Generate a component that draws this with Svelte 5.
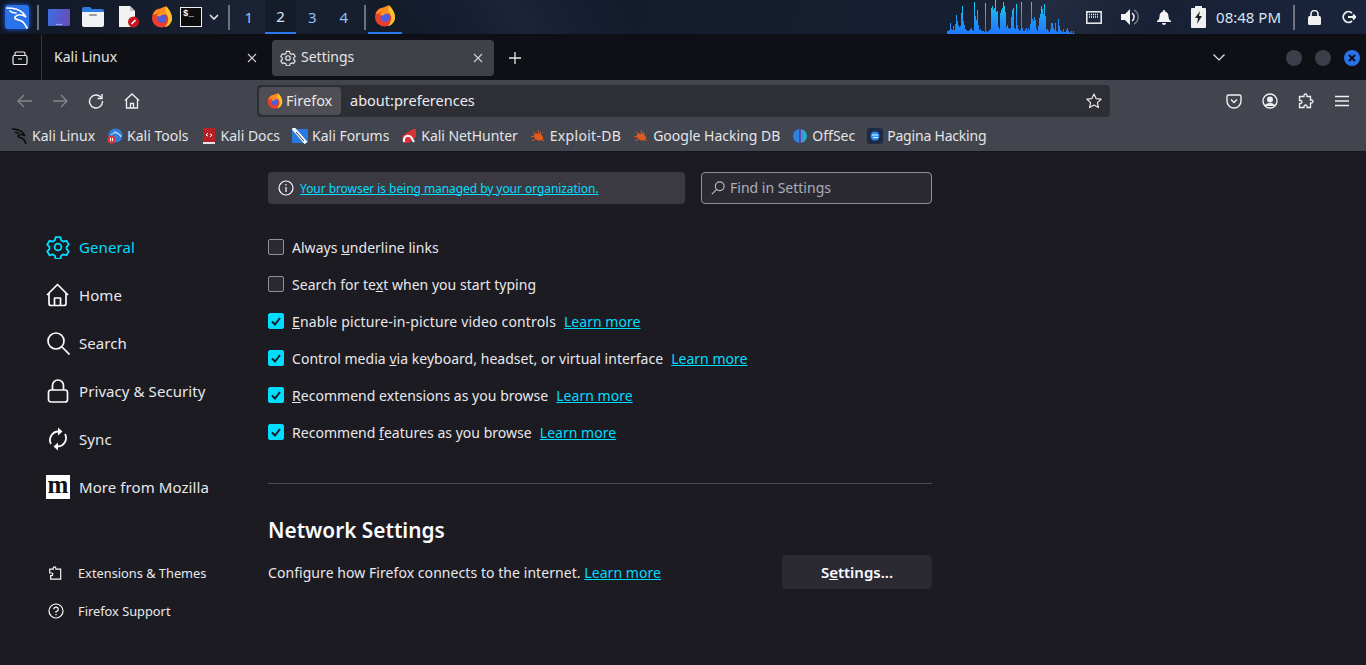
<script>
  const cpu = [3,3,4,11,5,4,8,4,10,19,13,9,7,8,21,28,13,9,5,4,3,3,4,5,6,4,3,32,18,14,24,9,4,5,3,3,3,2,31,3,2,3,4,5,26,28,24,26,34,22,23,7,5,21,24,26,32,28,22,7,9,6,5,6,17,24,26,6,5,30,9,5,3,4,32,6,3,3,5,6,3,6,4,10,32,15,13,17,14,5,3,8,16,20,28,25,20,30,18,4,5,3,2,5,11,11,6,4,11,3,2,15,8,4,3,2,5,2,2,4,6,3,2,1,3,1,3];
  const bookmarks = [
    { label: 'Kali Linux', icon: 'dragon', cls: '' },
    { label: 'Kali Tools', icon: 'tools', cls: '' },
    { label: 'Kali Docs', icon: 'docs', cls: '' },
    { label: 'Kali Forums', icon: 'forums', cls: '' },
    { label: 'Kali NetHunter', icon: 'hunter', cls: 'tight' },
    { label: 'Exploit-DB', icon: 'bug', cls: 'wider' },
    { label: 'Google Hacking DB', icon: 'bug', cls: '' },
    { label: 'OffSec', icon: 'offsec', cls: '' },
    { label: 'Pagina Hacking', icon: 'pagina', cls: 'narrow' }
  ];
</script>

{#snippet firefox(size)}
  <svg width={size} height={size} viewBox="0 0 24 24">
    <circle cx="11.5" cy="13" r="10.5" fill="#ea3f2e" />
    <path d="M2 10 C3 6 6 3 10 3 C13 1 15 1 17 0 C16 2 16 3 17 4 C22 7 24 12 22.5 17 C20 11 17 8 12 7.5 C8 7.5 5 9 2 10Z" fill="#ff8a1f" />
    <path d="M17 0.5 C20 4 24 9 22.5 16 C21.5 20 18 22.5 15 23 C19 19 20 13 17 9 C15 6 15 3 17 0.5Z" fill="#ffc22e" />
    <circle cx="12" cy="13.5" r="4.8" fill="#4a5fe0" />
    <path d="M6 11 C8 7 14 6.5 17.5 9 C14 8.8 11 9.5 10 11.5Z" fill="#ff9a1c" />
  </svg>
{/snippet}

{#snippet gear(size, color)}
  <svg width={size} height={size} viewBox="0 0 24 24" fill="none" stroke={color} stroke-width="1.8" stroke-linejoin="round">
    <path d="M9.6 2.2h4.8l.7 3 2.4 1.4 3-.9 2.3 4-2.2 2.1v2.4l2.2 2.1-2.3 4-3-.9-2.4 1.4-.7 3H9.6l-.7-3-2.4-1.4-3 .9-2.3-4 2.2-2.1v-2.4L1.2 9.7l2.3-4 3 .9 2.4-1.4z" />
    <circle cx="12" cy="12" r="3.4" />
  </svg>
{/snippet}

{#snippet check()}
  <i class="box on"><svg width="12" height="12" viewBox="0 0 12 12" fill="none" stroke="#1c1b22" stroke-width="2"><path d="M2 6.5 5 9.5 10 3" /></svg></i>
{/snippet}

{#snippet favicon(kind)}
  <svg width="16" height="16" viewBox="0 0 16 16" fill="none">
    {#if kind === 'dragon'}
      <path d="M0 1C4 1 8 2 11 5L13 8C10 6 7 6 6 8 6 10 9 9 11 11 13 12 13 14 14 16M3 4C4 5 6 5 7 5" stroke="#0a0a0a" stroke-width="1.5" />
    {:else if kind === 'tools'}
      <circle cx="8.5" cy="7.5" r="7" fill="#2f7fe0" />
      <path d="M4 7c3-3 6-3 10 1M7 4c3 0 5 2 7 5" stroke="#cfe4fb" stroke-width="1" />
      <circle cx="4.5" cy="11.5" r="4" fill="#e03a3a" />
      <path d="M3.5 10v3M5.5 10v3" stroke="#fff" />
    {:else if kind === 'docs'}
      <rect x="2" y="0" width="12" height="16" rx="1" fill="#b81f24" />
      <rect x="2" y="14" width="12" height="2" fill="#e6e6e6" />
      <path d="M7 5 5 7l2 1M9 6l2 1-2 2" stroke="#fff" />
    {:else if kind === 'forums'}
      <rect x="0" y="1" width="16" height="14" rx="1" fill="#2a7be0" />
      <path d="M1 0l13 15" stroke="#fff" stroke-width="3.5" />
      <path d="M4 4l8 9" stroke="#333" stroke-width="1" />
    {:else if kind === 'hunter'}
      <path d="M1 8 12 1h3v8l-7 6H3z" fill="#d8323a" />
      <path d="M3 14c-1-5 3-8 7-5l3 5" stroke="#fff" stroke-width="2" />
    {:else if kind === 'bug'}
      <ellipse cx="8.5" cy="9" rx="5" ry="3.2" fill="#e2591d" transform="rotate(25 8.5 9)" />
      <path d="M1 9l5-1M3 4l4 3M8 2l1 4M2 13l5-3M11 4l-1 3M14 13l-3-2" stroke="#e2591d" />
    {:else if kind === 'offsec'}
      <path d="M7 1C3 2 1 5 1 8s2 6 6 7z" fill="#2f7fe0" />
      <path d="M9 1c4 1 6 4 6 7s-2 6-6 7z" fill="#2aa7c9" />
      <rect x="7.4" y="1" width="1.4" height="14" fill="#6d3fd0" />
    {:else}
      <rect width="16" height="16" rx="3" fill="#1f2a44" />
      <circle cx="8" cy="8" r="4.5" fill="#2f8bf0" />
      <path d="M5 7h6M6 9.5h5" stroke="#dff" />
    {/if}
  </svg>
{/snippet}

<div class="screen">
  <div class="panel">
    <div class="launcher">
      <svg width="24" height="24" viewBox="0 0 24 24" fill="none" stroke="#fff" stroke-width="1.7" stroke-linecap="round">
        <path d="M2 3C7 3 14 4 18 8L21 12C17 9 12 9 10 12 9 15 14 14 18 17 20 19 21 21 22 23" />
        <path d="M5 6C7 8 8 8 11 8" />
      </svg>
    </div>
    <i class="sep first"></i>
    <div class="launch-icons">
      <span class="desk"><b>...</b></span>
      <svg class="folder" width="22" height="20" viewBox="0 0 22 20">
        <path d="M0 2a2 2 0 0 1 2-2h6l2 2h10a2 2 0 0 1 2 2v2H0z" fill="#2a7ce0" />
        <path d="M0 5h22v13a2 2 0 0 1-2 2H2a2 2 0 0 1-2-2z" fill="#f1f2f3" />
        <rect x="7" y="7" width="8" height="2" rx="1" fill="#9a9ea4" />
      </svg>
      <svg class="doc" width="22" height="22" viewBox="0 0 22 22">
        <path d="M1 0h11l5 5v16H1z" fill="#f2f2f2" />
        <path d="M12 0l5 5h-5z" fill="#bdbdbd" />
        <circle cx="15.5" cy="16" r="5.5" fill="#c8141e" />
        <path d="M13.5 18l4-4" stroke="#fff" stroke-width="1.6" />
      </svg>
      <span class="ff">{@render firefox(22)}</span>
      <span class="term">$_</span>
      <svg class="chev" width="10" height="6" viewBox="0 0 10 6" fill="none" stroke="#e6e6e6" stroke-width="1.6"><path d="M1 1l4 4 4-4" /></svg>
    </div>
    <i class="sep"></i>
    <div class="workspaces">
      <span>1</span>
      <span class="on">2</span>
      <span>3</span>
      <span>4</span>
    </div>
    <i class="sep"></i>
    <div class="task">{@render firefox(22)}</div>

    <div class="tray">
      <svg class="graph" width="127" height="34" viewBox="0 0 127 34">
        <defs>
          <linearGradient id="cpu" gradientUnits="userSpaceOnUse" x1="0" y1="34" x2="0" y2="0">
            <stop offset="0" stop-color="#1f78ff" />
            <stop offset="0.5" stop-color="#1f9bf5" />
            <stop offset="1" stop-color="#12e6ea" />
          </linearGradient>
        </defs>
        {#each cpu as v, i}
          <rect x={i} y={34 - v} width="1" height={v} fill="url(#cpu)" />
        {/each}
      </svg>
      <svg class="t-net" width="16" height="13" viewBox="0 0 16 13" fill="none" stroke="#f2f2f2" stroke-width="1.5">
        <rect x="0.8" y="0.8" width="14.4" height="11.4" />
        <path d="M3 3.5h10M3 6h10" stroke-dasharray="1 1" />
      </svg>
      <svg class="t-vol" width="18" height="16" viewBox="0 0 18 16">
        <path d="M0 5h4l5-5v16l-5-5H0z" fill="#f2f2f2" />
        <path d="M11 4a5 5 0 0 1 0 8" stroke="#f2f2f2" stroke-width="1.5" fill="none" />
        <path d="M13 1a8 8 0 0 1 0 14" stroke="#777" stroke-width="1.5" fill="none" />
      </svg>
      <svg class="t-bell" width="14" height="15" viewBox="0 0 14 15">
        <path d="M7 0a1 1 0 0 1 1 1.5c2.5.5 3.5 2.5 3.5 5 0 2 .5 3 2.5 4.5v1H0v-1c2-1.5 2.5-2.5 2.5-4.5 0-2.5 1-4.5 3.5-5A1 1 0 0 1 7 0zM5 13h4a2 2 0 0 1-4 0z" fill="#f2f2f2" />
      </svg>
      <svg class="t-bat" width="15" height="22" viewBox="0 0 15 22">
        <path d="M4 0h7v2h3a1 1 0 0 1 1 1v18a1 1 0 0 1-1 1H1a1 1 0 0 1-1-1V3a1 1 0 0 1 1-1h3z" fill="#f0f0f0" />
        <path d="M9 5 4 12h3l-1 6 5-8H8z" fill="#1a1f2a" />
      </svg>
      <span class="clock">08:48 PM</span>
      <i class="sep tray-sep"></i>
      <svg class="t-lock" width="13" height="15" viewBox="0 0 13 15">
        <path d="M3 6V4a3.5 3.5 0 0 1 7 0v2" fill="none" stroke="#f0f0f0" stroke-width="1.6" />
        <rect y="6" width="13" height="9" rx="1.5" fill="#f0f0f0" />
      </svg>
      <svg class="t-out" width="14" height="14" viewBox="0 0 14 14" fill="none" stroke="#f0f0f0" stroke-width="1.8">
        <path d="M10 3a5.3 5.3 0 1 0 0 8" />
        <path d="M6 7h8M11 4.5 13.5 7 11 9.5" />
      </svg>
    </div>
  </div>

  <div class="tabbar">
    <div class="tab-list">
      <svg width="16" height="14" viewBox="0 0 16 14" fill="none" stroke="#e8e8ea" stroke-width="1.2">
        <rect x="1" y="4.5" width="14" height="9" rx="1.5" />
        <path d="M3 4.5V2.5a1.5 1.5 0 0 1 1.5-1.5h7A1.5 1.5 0 0 1 13 2.5v2M6 8h4" />
      </svg>
    </div>
    <div class="tab">
      <span>Kali Linux</span>
      <svg class="close" width="10" height="10" viewBox="0 0 10 10" stroke="#d4d4d8" stroke-width="1.1"><path d="M1 1l8 8M9 1l-8 8" /></svg>
    </div>
    <div class="tab active">
      {@render gear(16, '#e4e4e8')}
      <span>Settings</span>
      <svg class="close" width="10" height="10" viewBox="0 0 10 10" stroke="#d4d4d8" stroke-width="1.1"><path d="M1 1l8 8M9 1l-8 8" /></svg>
    </div>
    <svg class="plus" width="12" height="12" viewBox="0 0 12 12" stroke="#e8e8ea" stroke-width="1.3"><path d="M6 0v12M0 6h12" /></svg>
    <svg class="all-tabs" width="12" height="7" viewBox="0 0 12 7" fill="none" stroke="#e8e8ea" stroke-width="1.2"><path d="M.5.5 6 6 11.5.5" /></svg>
    <div class="win-btns">
      <i></i>
      <i></i>
      <i class="x">
        <svg width="8" height="8" viewBox="0 0 8 8" stroke="#0d1016" stroke-width="2"><path d="M1 1l6 6M7 1 1 7" /></svg>
      </i>
    </div>
  </div>

  <div class="navbar">
    <div class="nav-btns">
      <svg width="16" height="14" viewBox="0 0 16 14" fill="none" stroke="#85878c" stroke-width="1.3"><path d="M15 7H1M7 1 1 7l6 6" /></svg>
      <svg width="16" height="14" viewBox="0 0 16 14" fill="none" stroke="#85878c" stroke-width="1.3"><path d="M1 7h14M9 1l6 6-6 6" /></svg>
      <svg class="reload" width="16" height="16" viewBox="0 0 16 16" fill="none" stroke="#f0f0f2" stroke-width="1.4"><path d="M13.5 5A6.5 6.5 0 1 0 14.5 8" /><path d="M14 1v4.5H9.5" /></svg>
      <svg class="home" width="16" height="16" viewBox="0 0 16 16" fill="none" stroke="#f0f0f2" stroke-width="1.3"><path d="M1 7.5 8 1l7 6.5M2.5 6.5V15h11V6.5M6.5 15v-4.5h3V15" /></svg>
    </div>
    <div class="urlbar">
      <div class="identity">
        {@render firefox(16)}
        <span>Firefox</span>
      </div>
      <span class="url">about:preferences</span>
      <svg class="star" width="16" height="16" viewBox="0 0 16 16" fill="none" stroke="#e8e8ea" stroke-width="1.2" stroke-linejoin="round"><path d="M8 1l2.1 4.6 5 .6-3.7 3.4 1 5L8 12.1l-4.400 2.500 1-5L.9 6.200l5-.6z" /></svg>
    </div>
    <div class="nav-right">
      <svg width="16" height="16" viewBox="0 0 16 16" fill="none" stroke="#f0f0f2" stroke-width="1.4"><path d="M2.5 2h11A1.5 1.5 0 0 1 15 3.5V8a7 7 0 0 1-14 0V3.5A1.5 1.5 0 0 1 2.5 2z" /><path d="M5 6.5 8 9.5l3-3" /></svg>
      <svg width="16" height="16" viewBox="0 0 16 16" fill="none" stroke="#f0f0f2" stroke-width="1.4"><circle cx="8" cy="8" r="7" /><circle cx="8" cy="6.5" r="2.3" fill="#f0f0f2" /><path d="M3.5 13c1-3 8-3 9 0" fill="#f0f0f2" /></svg>
      <svg width="16" height="16" viewBox="0 0 16 16" fill="none" stroke="#f0f0f2" stroke-width="1.3"><path d="M6 3.5V2.5a1.5 1.5 0 0 1 3 0v1h3.5v3.500h1a1.5 1.5 0 0 1 0 3h-1V14.500H9v-1a1.5 1.5 0 0 0-3 0v1H1.500V10.500h1a1.5 1.5 0 0 0 0-3h-1V3.500z" /></svg>
      <svg class="menu" width="14" height="12" viewBox="0 0 14 12" stroke="#f0f0f2" stroke-width="1.4"><path d="M0 1.5h14M0 6h14M0 10.5h14" /></svg>
    </div>
  </div>

  <div class="bookmarks">
    {#each bookmarks as b}
      <span class="bm {b.cls}">{@render favicon(b.icon)}<span>{b.label}</span></span>
    {/each}
  </div>

  <div class="page">
    <nav class="side">
      <div class="cat sel">
        <span class="cat-ic">{@render gear(24, '#00ddff')}</span><span>General</span>
      </div>
      <div class="cat">
        <span class="cat-ic"><svg width="24" height="24" viewBox="0 0 24 24" fill="none" stroke="#fbfbfe" stroke-width="1.7" stroke-linejoin="round"><path d="M1 12 11.5 1.5 22 12M3 10v10.5a2 2 0 0 0 2 2h13a2 2 0 0 0 2-2V10" /><path d="M8.5 22.5V15h6v7.5" /></svg></span><span>Home</span>
      </div>
      <div class="cat">
        <span class="cat-ic"><svg width="24" height="24" viewBox="0 0 24 24" fill="none" stroke="#fbfbfe" stroke-width="1.7"><circle cx="10" cy="10" r="8" /><path d="M16 16l7.5 7.5" /></svg></span><span>Search</span>
      </div>
      <div class="cat">
        <span class="cat-ic"><svg width="24" height="24" viewBox="0 0 24 24" fill="none" stroke="#fbfbfe" stroke-width="1.7"><path d="M6.5 11V6.5a5.5 5.5 0 0 1 11 0V11" /><rect x="2.5" y="11" width="19" height="12" rx="2.5" /></svg></span><span>Privacy &amp; Security</span>
      </div>
      <div class="cat">
        <span class="cat-ic"><svg width="24" height="24" viewBox="0 0 24 24" fill="none" stroke="#fbfbfe" stroke-width="1.8"><path d="M5 17a8.5 8.5 0 0 1 8-12.5M19 7a8.5 8.5 0 0 1-8 12.5" /><path d="M12 0.5l4.5 4-4.500 4zM12 15.500l-4.500 4 4.500 4z" fill="#fbfbfe" stroke="none" /></svg></span><span>Sync</span>
      </div>
      <div class="cat">
        <span class="cat-ic moz">m</span><span>More from Mozilla</span>
      </div>

      <div class="side-foot">
        <div class="foot">
          <span class="foot-ic"><svg width="14" height="14" viewBox="0 0 16 16" fill="none" stroke="#fbfbfe" stroke-width="1.3"><path d="M6 3.5V2.5a1.5 1.5 0 0 1 3 0v1h5.5v11.5H3V11h1a1.5 1.5 0 0 0 0-3H2V3.5z" /></svg></span>Extensions &amp; Themes
        </div>
        <div class="foot">
          <span class="foot-ic"><svg width="16" height="16" viewBox="0 0 16 16" fill="none" stroke="#fbfbfe" stroke-width="1.2"><circle cx="8" cy="8" r="7" /><path d="M5.8 6.2A2.2 2.2 0 1 1 8 8.5v1.2M8 11v1.3" /></svg></span>Firefox Support
        </div>
      </div>
    </nav>

    <main class="main">
      <div class="top-row">
        <div class="policy">
          <svg width="16" height="16" viewBox="0 0 16 16" fill="none" stroke="#fbfbfe" stroke-width="1.2"><circle cx="8" cy="8" r="7" /><path d="M8 7v5M8 4v1.5" /></svg>
          <a href="#policy">Your browser is being managed by your organization.</a>
        </div>
        <div class="find">
          <svg width="14" height="14" viewBox="0 0 16 16" fill="none" stroke="#bdbdc4" stroke-width="1.3"><circle cx="10" cy="6" r="5" /><path d="M6.5 9.5 1 15" /></svg>
          <span>Find in Settings</span>
        </div>
      </div>

      <div class="options">
        <div class="opt"><i class="box"></i><span>Always <u>u</u>nderline links</span></div>
        <div class="opt"><i class="box"></i><span>Search for te<u>x</u>t when you start typing</span></div>
        <div class="opt">{@render check()}<span class="pip"><u>E</u>nable picture-in-picture video controls</span><a href="#l">Learn more</a></div>
        <div class="opt">{@render check()}<span>Control media <u>v</u>ia keyboard, headset, or virtual interface</span><a href="#l">Learn more</a></div>
        <div class="opt">{@render check()}<span><u>R</u>ecommend extensions as you browse</span><a href="#l">Learn more</a></div>
        <div class="opt">{@render check()}<span>Recommend <u>f</u>eatures as you browse</span><a href="#l">Learn more</a></div>
      </div>

      <hr />

      <h2>Network Settings</h2>
      <div class="net-row">
        <p>Configure how Firefox connects to the internet. <a href="#l">Learn more</a></p>
        <button>S<u>e</u>ttings...</button>
      </div>
    </main>
  </div>
</div>

<style>
  :global(body) {
    margin: 0;
    overflow: hidden;
  }
  .screen {
    width: 1366px;
    height: 665px;
    display: flex;
    flex-direction: column;
    font-family: "Noto Sans", sans-serif;
    background: #1c1b22;
    color: #fbfbfe;
    overflow: hidden;
  }
  svg {
    display: block;
    flex: none;
  }

  /* desktop panel */
  .panel {
    height: 35px;
    flex: none;
    display: flex;
    align-items: center;
    box-sizing: border-box;
    background:
      linear-gradient(115deg, transparent 70%, #232c40 76%, transparent 84%),
      linear-gradient(60deg, transparent 30%, #1b2438 38%, transparent 46%),
      linear-gradient(100deg, #101725 0%, #1a2233 18%, #111a2b 34%, #151d2e 55%, #19233a 100%);
    border-bottom: 1px solid #0c0e13;
  }
  .launcher {
    width: 24px;
    height: 24px;
    margin-left: 5px;
    background: #2a72ea;
    border-radius: 3px;
    box-shadow: 0 0 5px #1d64ee;
  }
  .sep {
    width: 2px;
    height: 25px;
    background: #6d727c;
    flex: none;
  }
  .sep.first {
    margin-left: 8px;
  }
  .launch-icons {
    display: flex;
    align-items: center;
    width: 189px;
    padding-left: 9px;
    box-sizing: border-box;
  }
  .desk {
    width: 22px;
    height: 17px;
    background: linear-gradient(100deg, #3b6fe0, #6a4bb8);
    border-radius: 1px;
    display: flex;
    align-items: flex-end;
    justify-content: center;
  }
  .desk b {
    font-size: 8px;
    line-height: 8px;
    color: #fff;
    font-weight: 400;
  }
  .folder {
    margin-left: 12px;
  }
  .doc {
    margin-left: 14px;
  }
  .ff {
    margin-left: 11px;
  }
  .term {
    width: 22px;
    height: 20px;
    box-sizing: border-box;
    margin-left: 7px;
    border: 1px solid #f0f0f0;
    background: #0c0c0c;
    font-family: "Liberation Mono", monospace;
    font-size: 9px;
    font-weight: 700;
    line-height: 12px;
    padding-left: 2px;
  }
  .chev {
    margin-left: 7px;
  }
  .workspaces {
    display: flex;
    width: 134px;
    padding-left: 3px;
    box-sizing: border-box;
    height: 34px;
  }
  .workspaces span {
    width: 31.7px;
    box-sizing: border-box;
    display: flex;
    align-items: center;
    justify-content: center;
    font-size: 15px;
    color: #8fc0f0;
  }
  .workspaces .on {
    color: #cfe6fb;
    background: #141b29;
    border-bottom: 2px solid #2a78ee;
  }
  .task {
    width: 34px;
    height: 34px;
    margin-left: 2px;
    box-sizing: border-box;
    display: flex;
    align-items: center;
    justify-content: center;
    background: #141b29;
    border-bottom: 2px solid #2a78ee;
  }
  .tray {
    margin-left: auto;
    display: flex;
    align-items: center;
    height: 34px;
  }
  .graph {
    margin-right: 4px;
  }
  .t-net { margin: 0 7px 0 8px; }
  .t-vol { margin: 0 12px 0 12px; }
  .t-bell { margin: 0 10px 0 6px; }
  .t-bat { margin: 0 10px 0 10px; }
  .clock {
    font-size: 15px;
    color: #d8e4ef;
    white-space: nowrap;
  }
  .tray-sep {
    margin-left: 12px;
  }
  .t-lock { margin: 0 0 0 13px; }
  .t-out { margin: 0 10px 0 21px; }

  /* tabs */
  .tabbar {
    height: 45px;
    flex: none;
    display: flex;
    align-items: center;
    background: #0e1016;
    color: #e4e4e8;
    font-size: 14px;
  }
  .tab-list {
    width: 42px;
    height: 45px;
    box-sizing: border-box;
    padding-left: 12px;
    display: flex;
    align-items: center;
    border-right: 1px solid #34363c;
  }
  .tab {
    width: 230px;
    height: 36px;
    box-sizing: border-box;
    display: flex;
    align-items: center;
    padding: 0 15px 0 12px;
  }
  .tab span {
    flex: 1;
    padding-bottom: 2px;
  }
  .tab.active {
    width: 222px;
    background: #3f4148;
    border-radius: 4px;
    padding: 0 11px 0 8px;
    gap: 5px;
  }
  .plus {
    margin-left: 15px;
  }
  .all-tabs {
    margin-left: auto;
  }
  .win-btns {
    display: flex;
    gap: 13px;
    margin: 0 6px 0 61px;
  }
  .win-btns i {
    width: 16px;
    height: 16px;
    border-radius: 50%;
    background: #3b3f4a;
    display: flex;
    align-items: center;
    justify-content: center;
  }
  .win-btns .x {
    background: #2a72ea;
  }

  /* toolbar */
  .navbar {
    height: 42px;
    flex: none;
    display: flex;
    align-items: center;
    background: #42454d;
  }
  .nav-btns {
    width: 257px;
    box-sizing: border-box;
    padding-left: 17px;
    display: flex;
    align-items: center;
    gap: 19px;
  }
  .reload {
    margin-left: 1px;
  }
  .home {
    margin-left: 1px;
  }
  .urlbar {
    width: 853px;
    height: 32px;
    box-sizing: border-box;
    background: #2e2f35;
    border-radius: 4px;
    padding: 2px 8px 2px 2px;
    display: flex;
    align-items: center;
    font-size: 14.5px;
  }
  .identity {
    height: 28px;
    width: 82px;
    box-sizing: border-box;
    background: #4f4e54;
    border-radius: 4px;
    display: flex;
    align-items: center;
    gap: 3px;
    padding-left: 8px;
    color: #e8e8ea;
  }
  .identity span {
    padding-bottom: 2px;
  }
  .url {
    margin-left: 9px;
    flex: 1;
    color: #ececf0;
    padding-bottom: 2px;
  }
  .nav-right {
    display: flex;
    align-items: center;
    gap: 20px;
    margin-left: 116px;
  }
  .menu {
    margin-left: 1px;
  }

  /* bookmarks */
  .bookmarks {
    height: 30px;
    flex: none;
    box-sizing: border-box;
    display: flex;
    align-items: center;
    gap: 12px;
    padding: 0 0 1px 12px;
    background: #42454d;
    border-bottom: 1px solid #15161a;
    color: #e4e4e8;
    font-size: 14px;
  }
  .bm {
    display: flex;
    align-items: center;
    gap: 4px;
    white-space: nowrap;
  }
  .bm span {
    padding-bottom: 2px;
  }
  .bm.tight {
    letter-spacing: -0.07px;
  }
  .bm.wider {
    letter-spacing: 0.3px;
  }
  .bm.narrow {
    letter-spacing: -0.2px;
  }

  /* preferences page */
  .page {
    flex: 1;
    display: flex;
    min-height: 0;
  }
  .side {
    width: 268px;
    flex: none;
    box-sizing: border-box;
    padding: 71px 0 0 46px;
  }
  .cat {
    height: 48px;
    display: flex;
    align-items: center;
    gap: 9px;
    font-size: 15px;
    letter-spacing: 0.08px;
    color: #e8e8ec;
  }
  .cat.sel {
    color: #00ddff;
  }
  .cat-ic {
    width: 24px;
    height: 24px;
    flex: none;
  }
  .moz {
    background: #fff;
    color: #111;
    font-family: "Liberation Serif", serif;
    font-weight: 700;
    font-size: 25px;
    line-height: 20px;
    text-align: center;
  }
  .side-foot {
    margin-top: 43px;
  }
  .foot {
    height: 38px;
    display: flex;
    align-items: center;
    font-size: 12.8px;
    color: #e8e8ec;
  }
  .foot-ic {
    width: 32px;
    padding-left: 2px;
    box-sizing: border-box;
    flex: none;
  }
  .main {
    width: 664px;
    padding-top: 20px;
  }
  .top-row {
    display: flex;
    gap: 16px;
  }
  .policy {
    width: 417px;
    height: 32px;
    box-sizing: border-box;
    background: #3b3a42;
    border-radius: 4px;
    display: flex;
    align-items: center;
    gap: 6px;
    padding-left: 10px;
  }
  .policy a {
    font-size: 12px;
    letter-spacing: -0.06px;
  }
  a {
    color: #00ddff;
    text-decoration: underline;
  }
  .find {
    width: 231px;
    height: 32px;
    box-sizing: border-box;
    border: 1px solid #8f8f9d;
    border-radius: 4px;
    background: #2b2a33;
    display: flex;
    align-items: center;
    gap: 5px;
    padding-left: 9px;
    font-size: 14px;
    color: #aeaeb6;
  }
  .find span {
    padding-bottom: 2px;
  }
  .options {
    margin-top: 25px;
  }
  .opt {
    height: 37px;
    display: flex;
    align-items: center;
    font-size: 14px;
    letter-spacing: 0.03px;
    color: #e8e8ec;
  }
  .opt .pip {
    letter-spacing: 0.16px;
  }
  .opt a {
    margin-left: 8px;
  }
  .box {
    width: 16px;
    height: 16px;
    box-sizing: border-box;
    border: 1px solid #8f8f9d;
    background: #2b2a33;
    border-radius: 2px;
    margin: 0 8px 1px 0;
    flex: none;
    display: flex;
    align-items: center;
    justify-content: center;
  }
  .box.on {
    background: #00ddff;
    border-color: #00ddff;
  }
  hr {
    margin: 32px 0 0;
    border: 0;
    border-top: 1px solid #4a4a52;
  }
  h2 {
    margin: 31px 0 0;
    font-size: 20.8px;
    line-height: 30px;
    font-weight: 600;
    color: #fbfbfe;
  }
  .net-row {
    margin-top: 10px;
    display: flex;
    align-items: center;
    justify-content: space-between;
  }
  .net-row p {
    margin: 0;
    font-size: 14px;
    letter-spacing: 0.06px;
    color: #e8e8ec;
  }
  button {
    width: 150px;
    height: 34px;
    border: 0;
    border-radius: 4px;
    background: #2b2a33;
    color: #fbfbfe;
    font: 600 15px "Noto Sans", sans-serif;
  }
</style>
